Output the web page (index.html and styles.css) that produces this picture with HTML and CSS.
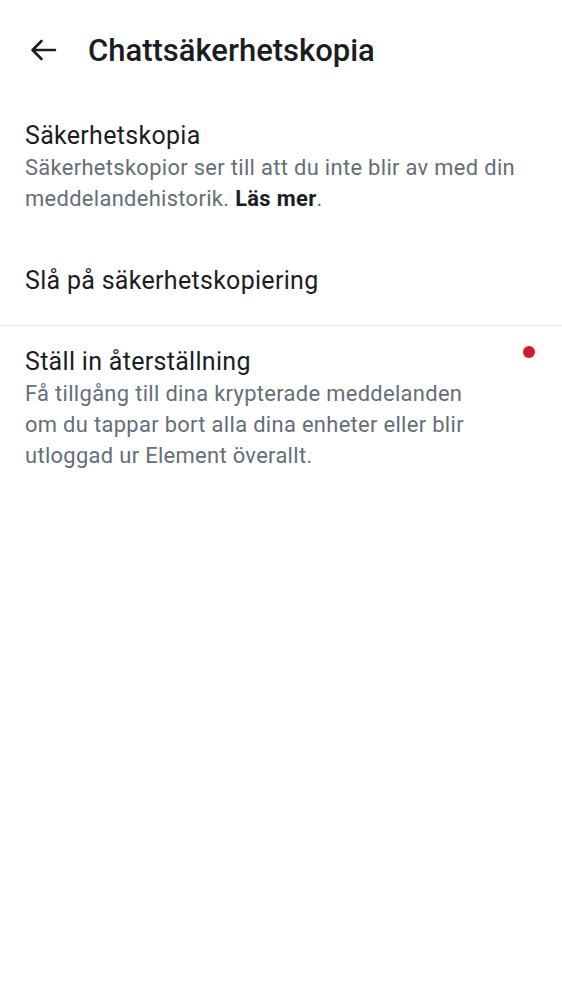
FILE: index.html
```html
<!DOCTYPE html>
<html lang="sv">
<head>
<meta charset="utf-8">
<link rel="stylesheet" href="styles.css">
</head>
<body>
<div class="screen">
  <header class="topbar">
    <button class="back" aria-label="Tillbaka">
      <svg width="28" height="28" viewBox="0 0 28 28" fill="none" stroke="#1b1d22" stroke-width="2.6" stroke-linecap="round" stroke-linejoin="round">
        <path d="M26 14H3.5M12.5 5L3.5 14l9 9"/>
      </svg>
    </button>
    <h1 class="title">Chattsäkerhetskopia</h1>
  </header>

  <section class="item first">
    <div class="item-text">
      <div class="item-title">Säkerhetskopia</div>
      <div class="item-desc">Säkerhetskopior ser till att du inte blir av med din meddelandehistorik. <b>Läs mer</b>.</div>
    </div>
  </section>

  <section class="item single">
    <div class="item-title">Slå på säkerhetskopiering</div>
  </section>

  <div class="divider"></div>

  <section class="item with-badge">
    <div class="item-text narrow">
      <div class="item-title">Ställ in återställning</div>
      <div class="item-desc">Få tillgång till dina krypterade meddelanden om du tappar bort alla dina enheter eller blir utloggad ur Element överallt.</div>
    </div>
    <span class="dot"></span>
  </section>
</div>
</body>
</html>
```

FILE: styles.css
```css
html, body {
  margin: 0;
  padding: 0;
  background: #ffffff;
}
body {
  font-family: Roboto, "Noto Sans", sans-serif;
  color: #1b1d22;
}
.screen {
  width: 562px;
  min-height: 1000px;
  display: flex;
  flex-direction: column;
}
.topbar {
  height: 100px;
  display: flex;
  align-items: center;
  padding-left: 29px;
  box-sizing: border-box;
}
.back {
  border: 0;
  background: none;
  padding: 0;
  margin: 0;
  width: 28px;
  height: 28px;
  display: flex;
  align-items: center;
  justify-content: center;
}
.title {
  margin: 0 0 0 31px;
  font-size: 31px;
  font-weight: 500;
  letter-spacing: 0;
  color: #1b1d22;
}
.item {
  padding: 0 25px;
  display: flex;
  align-items: flex-start;
}
.item-title {
  font-size: 25px;
  line-height: 32px;
  letter-spacing: 0.3px;
  color: #1b1d22;
}
.item-desc {
  font-size: 21.9px;
  line-height: 31.25px;
  letter-spacing: 0.33px;
  color: #656d77;
}
.item-desc b {
  font-weight: 700;
  color: #1b1d22;
}
.first {
  padding-top: 20px;
  padding-bottom: 25px;
}
.single {
  padding-top: 25px;
  padding-bottom: 28px;
}
.item-text.narrow {
  width: 468px;
}
.divider {
  height: 1px;
  background: #e3e3ea;
}
.with-badge {
  padding-top: 20px;
  justify-content: space-between;
  padding-right: 27px;
}
.dot {
  width: 12px;
  height: 12px;
  border-radius: 50%;
  background: #d51928;
}
```
